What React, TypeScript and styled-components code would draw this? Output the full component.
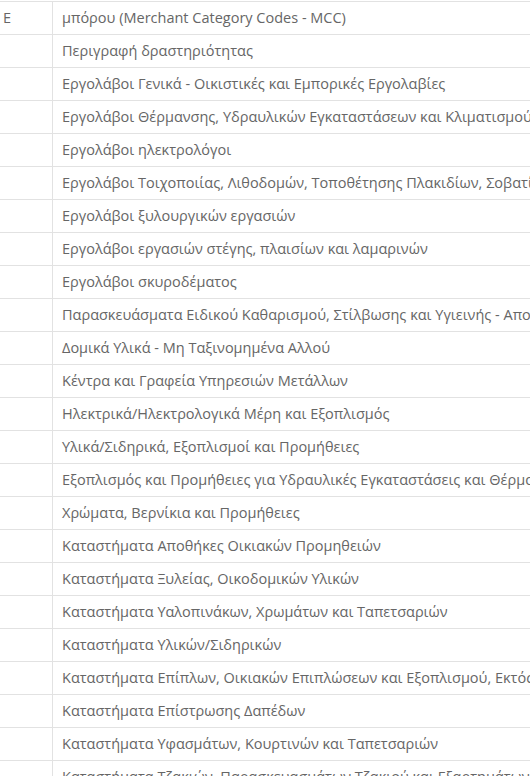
import styled, { createGlobalStyle } from "styled-components";

const GlobalStyle = createGlobalStyle`
  html, body {
    margin: 0;
    padding: 0;
    overflow: hidden;
    background: #ffffff;
  }
`;

const Page = styled.div`
  padding-top: 1px;
  width: 530px;
  overflow: hidden;
`;

const Table = styled.table`
  border-collapse: collapse;
  font-family: "Open Sans", "Noto Sans", sans-serif;
  font-size: 14.5px;
  color: #666666;
`;

const Row = styled.tr`
  border-top: 1px solid #e2e2e2;
  border-bottom: 1px solid #e2e2e2;
`;

const CodeCell = styled.td`
  width: 41px;
  min-width: 41px;
  padding: 6px 8px 6px 3px;
  line-height: 20px;
  border-right: 1px solid #e2e2e2;
  white-space: nowrap;
  overflow: hidden;
`;

const DescCell = styled.td`
  padding: 6px 8px 6px 9px;
  line-height: 20px;
  white-space: nowrap;
`;

const rows: { code?: string; text: string }[] = [
  { code: "E", text: "μπόρου (Merchant Category Codes - MCC)" },
  { text: "Περιγραφή δραστηριότητας" },
  { text: "Εργολάβοι Γενικά - Οικιστικές και Εμπορικές Εργολαβίες" },
  { text: "Εργολάβοι Θέρμανσης, Υδραυλικών Εγκαταστάσεων και Κλιματισμού" },
  { text: "Εργολάβοι ηλεκτρολόγοι" },
  { text: "Εργολάβοι Τοιχοποιίας, Λιθοδομών, Τοποθέτησης Πλακιδίων, Σοβατίσματος και Μόνωσης" },
  { text: "Εργολάβοι ξυλουργικών εργασιών" },
  { text: "Εργολάβοι εργασιών στέγης, πλαισίων και λαμαρινών" },
  { text: "Εργολάβοι σκυροδέματος" },
  { text: "Παρασκευάσματα Ειδικού Καθαρισμού, Στίλβωσης και Υγιεινής - Απολυμαντικά" },
  { text: "Δομικά Υλικά - Μη Ταξινομημένα Αλλού" },
  { text: "Κέντρα και Γραφεία Υπηρεσιών Μετάλλων" },
  { text: "Ηλεκτρικά/Ηλεκτρολογικά Μέρη και Εξοπλισμός" },
  { text: "Υλικά/Σιδηρικά, Εξοπλισμοί και Προμήθειες" },
  { text: "Εξοπλισμός και Προμήθειες για Υδραυλικές Εγκαταστάσεις και Θέρμανση" },
  { text: "Χρώματα, Βερνίκια και Προμήθειες" },
  { text: "Καταστήματα Αποθήκες Οικιακών Προμηθειών" },
  { text: "Καταστήματα Ξυλείας, Οικοδομικών Υλικών" },
  { text: "Καταστήματα Υαλοπινάκων, Χρωμάτων και Ταπετσαριών" },
  { text: "Καταστήματα Υλικών/Σιδηρικών" },
  { text: "Καταστήματα Επίπλων, Οικιακών Επιπλώσεων και Εξοπλισμού, Εκτός από Συσκευές" },
  { text: "Καταστήματα Επίστρωσης Δαπέδων" },
  { text: "Καταστήματα Υφασμάτων, Κουρτινών και Ταπετσαριών" },
  { text: "Καταστήματα Τζακιών, Παρασκευασμάτων Τζακιού και Εξαρτημάτων" },
];

export default function App() {
  return (
    <>
      <GlobalStyle />
      <Page>
        <Table>
          <tbody>
            {rows.map((r, i) => (
              <Row key={i}>
                <CodeCell>{r.code ?? ""}</CodeCell>
                <DescCell>{r.text}</DescCell>
              </Row>
            ))}
          </tbody>
        </Table>
      </Page>
    </>
  );
}
